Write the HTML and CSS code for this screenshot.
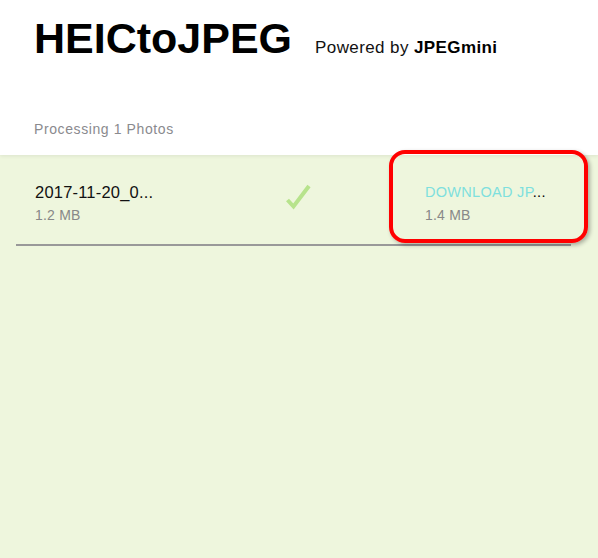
FILE: index.html
```html
<!DOCTYPE html>
<html>
<head>
<meta charset="utf-8">
<link rel="stylesheet" href="styles.css">
</head>
<body>
<header class="top">
  <div class="brand">
    <h1 class="title">HEICtoJPEG</h1>
    <span class="powered">Powered by <b>JPEGmini</b></span>
  </div>
  <div class="status">Processing 1 Photos</div>
</header>
<main class="list">
  <div class="row">
    <div class="file">
      <div class="name">2017-11-20_0...</div>
      <div class="size">1.2 MB</div>
    </div>
    <div class="check">
      <svg width="28" height="28" viewBox="0 0 28 28"><path d="M3.5 17 L9.5 23.5 L25 3" fill="none" stroke="#b7e38c" stroke-width="4" stroke-linecap="butt"/></svg>
    </div>
    <div class="file dl">
      <div class="dlname"><span class="link">DOWNLOAD JP</span><span class="dots">...</span></div>
      <div class="size">1.4 MB</div>
    </div>
  </div>
  <div class="highlight"></div>
</main>
</body>
</html>
```
FILE: styles.css
```css
html, body {
  margin: 0;
  padding: 0;
  height: 100%;
}
body {
  font-family: "Liberation Sans", Arial, sans-serif;
  background: #eef6dd;
  display: flex;
  flex-direction: column;
}
.top {
  background: #fff;
  padding: 17px 34px 17px;
  box-shadow: 0 1px 4px rgba(0, 0, 0, 0.08);
  position: relative;
  z-index: 1;
  height: 155px;
  box-sizing: border-box;
}
.brand {
  display: flex;
  align-items: baseline;
  gap: 23px;
}
.title {
  margin: 0;
  font-size: 43px;
  line-height: 43px;
  font-weight: bold;
  color: #000;
}
.powered {
  font-size: 17px;
  color: #111;
  letter-spacing: 0.4px;
}
.powered b {
  color: #000;
}
.status {
  margin-top: 60px;
  font-size: 14px;
  line-height: 18px;
  color: #8a8a8e;
  letter-spacing: 0.6px;
}
.list {
  flex: 1;
  background: #eef6dd;
  position: relative;
}
.row {
  margin: 0 27px 0 16px;
  border-bottom: 2px solid #999;
  display: grid;
  grid-template-columns: 251px 139px 1fr;
  padding: 27px 0 20px 19px;
}
.name {
  font-size: 16.5px;
  line-height: 20px;
  color: #111;
  letter-spacing: 0.2px;
}
.size {
  margin-top: 4px;
  font-size: 14px;
  line-height: 18px;
  color: #888;
  letter-spacing: 0.2px;
}
.check {
  padding-top: 1px;
  margin-left: -2px;
}
.check svg {
  display: block;
}
.dlname {
  font-size: 14.5px;
  line-height: 20px;
  letter-spacing: 0.3px;
}
.link {
  color: #7ee0de;
}
.dots {
  color: #000;
}
.highlight {
  position: absolute;
  z-index: 2;
  left: 389px;
  top: -5px;
  width: 199px;
  height: 93px;
  box-sizing: border-box;
  border: 4px solid #ff0000;
  border-radius: 16px;
  box-shadow: 2px 2px 4px rgba(0, 0, 0, 0.3);
}
```
